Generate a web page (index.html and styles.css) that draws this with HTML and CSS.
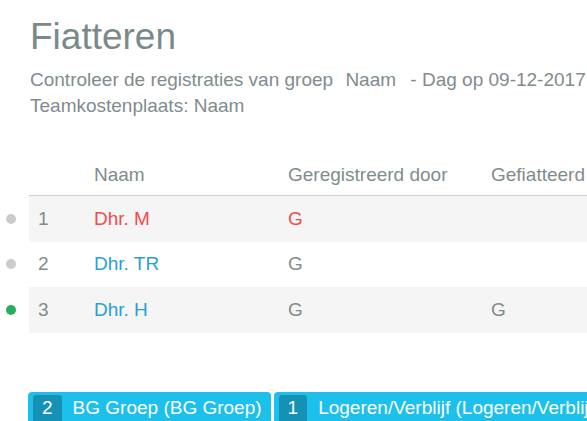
FILE: index.html
```html
<!DOCTYPE html>
<html lang="nl">
<head>
<meta charset="utf-8">
<title>Fiatteren</title>
<link rel="stylesheet" href="styles.css">
</head>
<body>
<div class="page">
  <h1 class="title">Fiatteren</h1>
  <p class="subtitle">Controleer de registraties van groep <span class="group">Naam</span> - Dag op 09-12-2017<br>Teamkostenplaats: Naam</p>

  <div class="table">
    <div class="row head">
      <div class="dot-cell"></div>
      <div class="cells">
        <div class="c c-num"></div>
        <div class="c c-name">Naam</div>
        <div class="c c-reg">Geregistreerd door</div>
        <div class="c c-fiat">Gefiatteerd door</div>
      </div>
    </div>
    <div class="row odd">
      <div class="dot-cell"><span class="dot grey"></span></div>
      <div class="cells">
        <div class="c c-num">1</div>
        <div class="c c-name red">Dhr. M</div>
        <div class="c c-reg red">G</div>
        <div class="c c-fiat"></div>
      </div>
    </div>
    <div class="row">
      <div class="dot-cell"><span class="dot grey"></span></div>
      <div class="cells">
        <div class="c c-num">2</div>
        <div class="c c-name blue">Dhr. TR</div>
        <div class="c c-reg">G</div>
        <div class="c c-fiat"></div>
      </div>
    </div>
    <div class="row odd">
      <div class="dot-cell"><span class="dot green"></span></div>
      <div class="cells">
        <div class="c c-num">3</div>
        <div class="c c-name blue">Dhr. H</div>
        <div class="c c-reg">G</div>
        <div class="c c-fiat">G</div>
      </div>
    </div>
  </div>

  <div class="tabs">
    <div class="tab"><span class="badge">2</span><span class="tab-label">BG Groep (BG Groep)</span></div>
    <div class="tab"><span class="badge">1</span><span class="tab-label">Logeren/Verblijf (Logeren/Verblijf)</span></div>
  </div>
</div>
</body>
</html>
```
FILE: styles.css
```css
html, body {
  margin: 0;
  padding: 0;
  background: #ffffff;
  overflow: hidden;
}
body {
  font-family: "Liberation Sans", Arial, sans-serif;
  color: #7f8c8d;
  width: 587px;
  height: 421px;
}
.page {
  width: 1000px;
  white-space: nowrap;
}
.title {
  margin: 16px 0 0 30px;
  font-size: 37px;
  line-height: 42px;
  font-weight: normal;
  color: #7b898b;
}
.subtitle {
  margin: 9px 0 0 30px;
  font-size: 19px;
  line-height: 26px;
  color: #808c8e;
}
.group {
  margin: 0 9px 0 7px;
}
.table {
  margin-top: 36px;
  font-size: 19px;
}
.row {
  display: flex;
}
.dot-cell {
  width: 29px;
  flex: none;
  display: flex;
  align-items: center;
  justify-content: flex-start;
  padding-left: 6px;
  box-sizing: border-box;
}
.dot {
  width: 10px;
  height: 10px;
  border-radius: 50%;
  display: block;
}
.dot.grey { background: #cccccc; }
.dot.green { background: #27ae60; }
.cells {
  flex: 1;
  display: flex;
  align-items: center;
  height: 45.5px;
}
.head .cells {
  height: 40px;
  border-bottom: 1px solid #cfcfcf;
}
.odd .cells {
  background: #f5f5f5;
}
.c {
  padding-left: 9px;
  box-sizing: border-box;
  color: #7f8c8d;
}
.c-num { width: 56px; }
.c-name { width: 194px; }
.c-reg { width: 203px; }
.c-fiat { width: 300px; }
.c.red { color: #ee4d4d; }
.c.blue { color: #2a9fd6; }
.tabs {
  margin: 59px 0 0 28px;
  display: flex;
  gap: 3px;
}
.tab {
  display: flex;
  align-items: flex-start;
  height: 36px;
  padding: 3px 9px 0 5px;
  background: #1dc0eb;
  border-radius: 4px 4px 0 0;
  font-size: 19px;
  line-height: 26px;
  color: #ffffff;
}
.badge {
  background: #1591b6;
  border-radius: 3px 3px 0 0;
  padding: 0 9px;
  height: 33px;
}
.tab-label {
  margin-left: 11px;
}
```
